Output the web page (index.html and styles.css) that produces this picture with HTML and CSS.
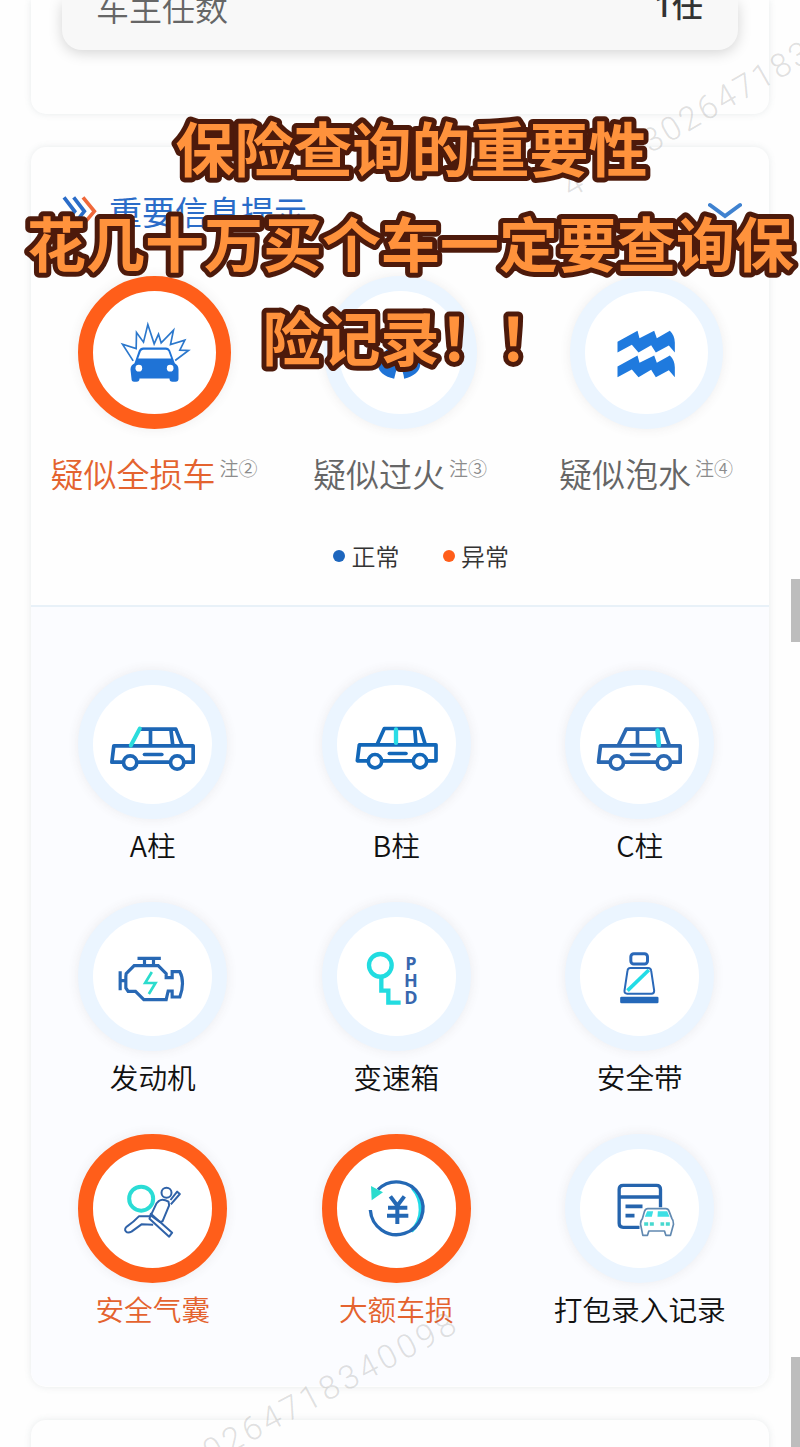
FILE: index.html
```html
<!DOCTYPE html>
<html lang="zh-CN">
<head>
<meta charset="utf-8">
<title>重要信息提示</title>
<link rel="stylesheet" href="styles.css">
</head>
<body>
<div class="screen">
  <main class="page">
    <section class="card card-owner">
      <div class="owner-row"><span class="owner-label">车主任数</span><span class="owner-value">1任</span></div>
    </section>

    <section class="card card-info">
      <header class="info-head">
        <svg class="arrows" viewBox="186 588 105 90" fill="none" stroke-width="11">
          <path d="M192 592l32 42-32 40M221 592l32 42-32 40" stroke="#2a6cc8"/>
          <path d="M249 592l34 42-34 40" stroke="#f0683a"/>
        </svg>
        <h2 class="info-title">重要信息提示</h2>
        <svg class="fold" viewBox="0 0 34 18" fill="none" stroke="#3f82d0" stroke-width="4" stroke-linecap="round"><path d="M2 3l15 11L32 3"/></svg>
      </header>

      <div class="risks">
        <div class="risk alert">
          <div class="ring ring-lg"><svg viewBox="277.5 274.5 369 369">
            <path d="M398 484L366 434l41 13 1-48 21 29 13-53 19 58 13-29 8 26 37-38-9 43 43-13-15 30 26 1-40 30" fill="none" stroke="#2c78cc" stroke-width="5"/>
            <path d="M402 491l13-38q4-9 13-9h68q9 0 13 9l14 38q11 6 11 19v28q0 9-9 9h-9q-9 0-9-10H417q0 10-9 10h-7q-8 0-8-9l-3-28q0-13 12-19z" fill="#1f73d6"/>
            <path d="M413 477l8-21q2-5 8-5h67q6 0 8 5l8 21z" fill="#fff"/>
            <circle cx="415" cy="506" r="10" fill="#fff"/><circle cx="509" cy="506" r="10" fill="#fff"/>
          </svg></div>
          <p class="risk-label">疑似全损车<small>注②</small></p>
        </div>
        <div class="risk">
          <div class="ring ring-lg"><svg viewBox="1015.5 274.5 369 369">
            <path d="M1205 380q-2 34-38 62-36 33-34 58 3 26 48 38 4-22 14-42 14 20 16 42 44-12 48-40 2-34-24-58-30-28-30-60z" fill="#1f73d6"/>
          </svg></div>
          <p class="risk-label">疑似过火<small>注③</small></p>
        </div>
        <div class="risk">
          <div class="ring ring-lg"><svg viewBox="555.5 274.5 369 369" fill="#1f7ade">
            <path d="M653 427l60-33 6 22 44-22 8 22 39-22q14 13 15 35v30l-18-21-39 21-14-22-38 22-20-23-43 23z"/>
            <path d="M653 501l60-33 6 22 44-22 8 22 39-22q14 13 15 35v30l-18-21-39 21-14-22-38 22-20-23-43 23z"/>
          </svg></div>
          <p class="risk-label">疑似泡水<small>注④</small></p>
        </div>
      </div>

      <div class="legend">
        <span class="legend-item"><i class="dot"></i>正常</span>
        <span class="legend-item"><i class="dot dot-alert"></i>异常</span>
      </div>

      <div class="parts">
        <div class="part">
          <div class="ring"><svg viewBox="70.5 73.5 357 357" fill="none" stroke="#1d66b5" stroke-width="11" stroke-linejoin="round" stroke-linecap="round">
            <path d="M158 305h-31l6-49h238v49h-25M207 305h92M213 206h106l20 50M243 206v50M304 206l6 50"/>
            <path d="M225 282h52" stroke-width="11"/><circle cx="182" cy="306" r="20"/><circle cx="323" cy="306" r="20"/>
            <path d="M211 204l-27 51" stroke="#2bdcdc" stroke-width="12"/>
          </svg></div>
          <p class="part-label">A柱</p>
        </div>
        <div class="part">
          <div class="ring"><svg viewBox="81 73.5 357 357" fill="none" stroke="#1267b8" stroke-width="11" stroke-linejoin="round" stroke-linecap="round">
            <path d="M171 301h-29l6-48h230v48h-24M219 301h88M201 253l22-49h108l15 49M314 204l4 49"/>
            <path d="M238 279h50" stroke-width="11"/><circle cx="195" cy="302" r="20"/><circle cx="330" cy="302" r="20"/>
            <path d="M258 207v40" stroke="#2bdce6" stroke-width="13"/>
          </svg></div>
          <p class="part-label">B柱</p>
        </div>
        <div class="part">
          <div class="ring"><svg viewBox="91.5 73.5 357 357" fill="none" stroke="#2a68b2" stroke-width="11" stroke-linejoin="round" stroke-linecap="round">
            <path d="M178 305h-31l6-49h239v49h-25M227 305h92M206 256l24-50h112l18 50M264 206v50"/>
            <path d="M246 282h52" stroke-width="11"/><circle cx="202" cy="306" r="20"/><circle cx="343" cy="306" r="20"/>
            <path d="M324 210l4 44" stroke="#2bdce6" stroke-width="14"/>
          </svg></div>
          <p class="part-label">C柱</p>
        </div>
        <div class="part">
          <div class="ring"><svg viewBox="70.5 66 357 357" fill="none" stroke="#2868b4" stroke-width="9.500">
            <path d="M204 190h70M225 190v22M252 190v22M152 229v57M152 257h18M170 236l24-24h72l24 24v12h18v-18h23q8 14 8 35t-8 41h-23v-18h-12l-6 26h-67l-25-25h-22l-7-10v-34z"/>
            <path d="M247 231l-20 33h31l-20 33" stroke="#2bdccd" stroke-width="8"/>
          </svg></div>
          <p class="part-label">发动机</p>
        </div>
        <div class="part">
          <div class="ring"><svg viewBox="81 66 357 357">
            <g fill="none" stroke="#22dce0" stroke-width="13"><circle cx="211" cy="211" r="34"/><path d="M214 245v42h21v36h37"/></g>
            <text class="gear" x="303" y="226">P</text><text class="gear" x="303" y="276">H</text><text class="gear" x="303" y="327">D</text>
          </svg></div>
          <p class="part-label">变速箱</p>
        </div>
        <div class="part">
          <div class="ring"><svg viewBox="811.5 66 357 357" fill="none" stroke="#2a68b8" stroke-width="7">
            <path d="M954 287l64-62" stroke="#22dce6" stroke-width="11"/>
            <rect x="964" y="176" width="50" height="31" rx="9" stroke-width="9"/>
            <path d="M962 219h54q8 0 9 8l9 60q0 9-8 9h-73q-9 0-8-9l9-60q1-8 8-8z" stroke-width="6"/>
            <rect x="932" y="305" width="115" height="20" rx="4" fill="#2468b9" stroke="none"/>
          </svg></div>
          <p class="part-label">安全带</p>
        </div>
        <div class="part alert">
          <div class="ring"><svg viewBox="70.5 72 357 357" fill="none" stroke="#2f62a8" stroke-width="6" stroke-linejoin="round">
            <circle cx="215" cy="221" r="36" stroke="#2bdcd5" stroke-width="12"/>
            <circle cx="291" cy="203" r="15"/>
            <path d="M303 225l20-25 8 7-27 31"/>
            <path d="M268 228q11-9 29 2l2 11-20 48-8 2-27-20 17-36z"/>
            <path d="M244 266l64 57-9 12-59-54z"/>
            <path d="M245 274h-37q-16 17-35 30-10 8-4 15t17 1l30-22 35 1"/>
          </svg></div>
          <p class="part-label">安全气囊</p>
        </div>
        <div class="part alert">
          <div class="ring"><svg viewBox="801 72 357 357" fill="none" stroke="#2468b4" stroke-width="10">
            <path d="M1028 189q24 27 24 65t-28 64" stroke="#20dbe8" stroke-width="12"/>
            <path d="M924 194A79 79 0 1 1 901 255"/>
            <path d="M903 183l36 19-34 24z" fill="#2bdccd" stroke="none"/>
            <path d="M961 214l21 28 21-28M982 240v57M954 248h58M951 272h64" stroke-width="12"/>
          </svg></div>
          <p class="part-label">大额车损</p>
        </div>
        <div class="part">
          <div class="ring"><svg viewBox="91.5 72 357 357" fill="none" stroke="#2564ad" stroke-width="10" stroke-linejoin="round">
            <path d="M270 307h-49q-12 0-12-12V193q0-12 12-12h100q12 0 12 12v54M209 216h124"/>
            <path d="M228 244h51M228 272h27" stroke-width="11"/>
            <path d="M295 251h54q7 0 10 8l8 21q5 5 5 18l-9 33h-14l-4-13h-47l-4 13h-14l-7-34q0-10 6-17l6-21q3-8 10-8z" fill="#fff" stroke="#6189b1" stroke-width="5"/>
            <path d="M293 259h18l-4 16h-21zM325 259h28l7 16h-36z" fill="#3edfe4" stroke="none"/>
            <path d="M284 297h12M301 297h12M333 297h11M349 297h12" stroke="#48d9cf" stroke-width="10"/>
          </svg></div>
          <p class="part-label">打包录入记录</p>
        </div>
      </div>
    </section>

    <section class="card card-next"></section>
  </main>

  <div class="mark mark-top">30264718340098</div>
  <div class="mark mark-four">4</div>
  <div class="mark mark-bottom">30264718340098</div>
  <i class="scroll scroll-mid"></i>
  <i class="scroll scroll-low"></i>
  <svg class="caption" viewBox="0 0 800 400">
    <text x="175.500" y="171.500">保险查询的重要性</text>
    <text x="27" y="267">花几十万买个车一定要查询保</text>
    <text x="262.500" y="361">险记录！！</text>
  </svg>
</div>
</body>
</html>
```
FILE: styles.css
```css
* { box-sizing: border-box; margin: 0; padding: 0; }
body { background: #fff; }
.screen {
  position: relative;
  width: 800px;
  height: 1447px;
  overflow: hidden;
  background: #fefefe;
  font-family: "Noto Sans CJK SC", sans-serif;
  font-weight: 350;
}
.page {
  display: flex;
  flex-direction: column;
  gap: 33px;
  padding: 0 31px;
}
.card {
  flex: none;
  background: #fefefe;
  border-radius: 15px;
  box-shadow: 0 0 7px rgba(90, 110, 120, .14);
}
.card-owner { height: 114px; padding: 0 31px; border-radius: 0 0 15px 15px; }
.owner-row {
  display: flex;
  justify-content: space-between;
  height: 50px;
  padding: 0 35px 0 34px;
  line-height: 14px;
  background: #f8f8f8;
  border-radius: 0 0 20px 20px;
  box-shadow: 0 3px 14px rgba(0, 0, 0, .17);
}
.owner-label { font-size: 33px; color: #666; }
.owner-value { font-family: Roboto, "Noto Sans CJK SC", sans-serif; font-size: 31px; font-weight: 500; color: #333; }

.card-info { height: 1240px; }
.info-head {
  display: flex;
  align-items: center;
  height: 129px;
  padding: 0 27px 2px 31px;
}
.arrows { width: 35px; height: 30px; margin-right: 12px; }
.info-title { font-size: 33px; line-height: 40px; font-weight: 400; color: #2a6cc8; }
.fold { width: 34px; height: 18px; margin-left: auto; }

.risks { display: grid; grid-template-columns: repeat(3, 246px); }
.risk, .part { display: flex; flex-direction: column; align-items: center; }
.ring {
  width: 149px;
  height: 149px;
  border: 15px solid #ebf5ff;
  border-radius: 50%;
  background: #fff;
  box-shadow: 0 0 12px rgba(80, 70, 70, .09);
}
.ring svg { display: block; width: 100%; height: 100%; }
.ring-lg { width: 153px; height: 153px; }
.alert .ring { border-color: #ff5e1a; }
.risk-label {
  margin-top: 24px;
  font-size: 33px;
  line-height: 40px;
  color: #666;
  white-space: nowrap;
}
.risk-label small {
  margin-left: 4px;
  font-size: 19px;
  line-height: 1;
  vertical-align: 11px;
  color: #8c8c8c;
}
.alert .risk-label, .alert .part-label { color: #e4632f; }

.legend {
  display: flex;
  gap: 43px;
  height: 30px;
  margin-top: 48px;
  padding-left: 302px;
  font-size: 24px;
  line-height: 30px;
  color: #333;
}
.legend-item { display: flex; align-items: center; gap: 6.5px; }
.dot { width: 12px; height: 12px; border-radius: 50%; background: #1d66bd; }
.dot-alert { background: #ff5e1a; }

.parts {
  display: grid;
  grid-template-columns: repeat(3, 243.5px);
  align-content: start;
  row-gap: 37px;
  height: 781px;
  margin-top: 34px;
  padding-top: 62.5px;
  border-top: 2px solid #e8f1f8;
  border-radius: 0 0 15px 15px;
  background: #fbfcff;
}
.part-label {
  margin-top: 6px;
  font-size: 28.7px;
  line-height: 40px;
  color: #111;
}
.gear {
  font: 700 54px "Open Sans", sans-serif;
  fill: #3767ae;
  text-anchor: middle;
}
.card-next { height: 60px; }

.mark {
  position: absolute;
  transform-origin: 0 50%;
  transform: rotate(-30deg);
  font: 300 33px/40px Roboto, sans-serif;
  letter-spacing: 2.800px;
  color: rgba(100, 100, 100, .2);
  white-space: nowrap;
}
.mark-top { left: 645px; top: 124px; }
.mark-four { left: 565px; top: 169px; }
.mark-bottom { left: 186px; top: 1444px; transform: rotate(-28deg); letter-spacing: 3.600px; }

.scroll { position: absolute; right: 0; width: 9px; background: #bdbdbd; }
.scroll-mid { top: 579px; height: 63px; }
.scroll-low { top: 1357px; height: 90px; }

.caption {
  position: absolute;
  top: 0;
  left: 0;
  width: 800px;
  height: 400px;
  font-size: 59px;
  font-weight: 700;
  fill: #ff923c;
  stroke: #4d1a0b;
  stroke-width: 10px;
  stroke-linejoin: round;
  paint-order: stroke fill;
}
```
